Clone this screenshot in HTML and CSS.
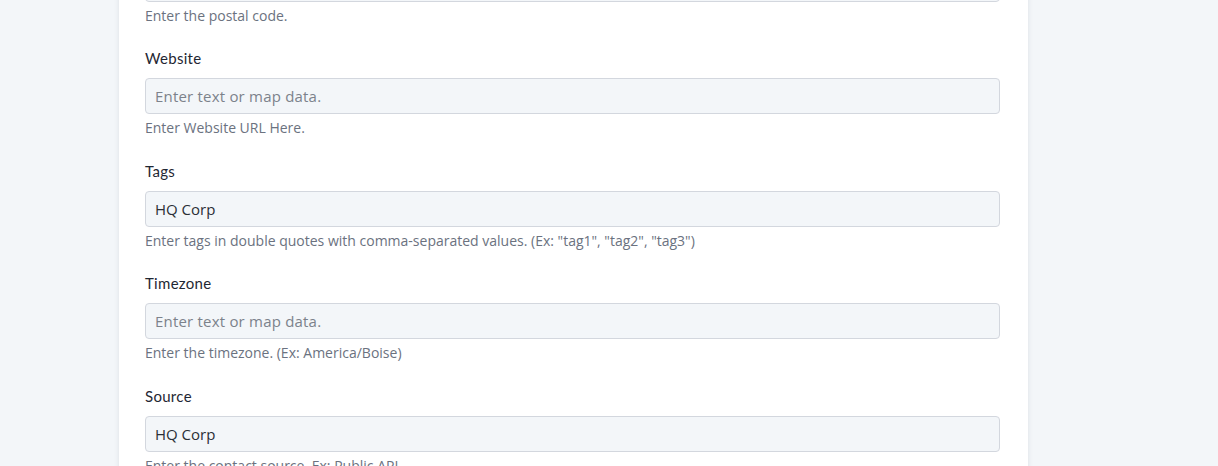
FILE: index.html
```html
<!DOCTYPE html>
<html lang="en">
<head>
<meta charset="utf-8">
<title>Contact details</title>
<link rel="stylesheet" href="styles.css">
</head>
<body>
<main class="page">
  <form class="card">
    <div class="field">
      <label class="label" for="postal">Postal Code</label>
      <input class="input" id="postal" type="text" placeholder="Enter text or map data.">
      <p class="help">Enter the postal code.</p>
    </div>
    <div class="field">
      <label class="label" for="website">Website</label>
      <input class="input" id="website" type="text" placeholder="Enter text or map data.">
      <p class="help">Enter Website URL Here.</p>
    </div>
    <div class="field">
      <label class="label" for="tags">Tags</label>
      <input class="input" id="tags" type="text" value="HQ Corp" placeholder="Enter text or map data.">
      <p class="help">Enter tags in double quotes with comma-separated values. (Ex: "tag1", "tag2", "tag3")</p>
    </div>
    <div class="field">
      <label class="label" for="timezone">Timezone</label>
      <input class="input" id="timezone" type="text" placeholder="Enter text or map data.">
      <p class="help">Enter the timezone. (Ex: America/Boise)</p>
    </div>
    <div class="field">
      <label class="label" for="source">Source</label>
      <input class="input" id="source" type="text" value="HQ Corp" placeholder="Enter text or map data.">
      <p class="help">Enter the contact source. Ex: Public API</p>
    </div>
  </form>
</main>
</body>
</html>
```

FILE: styles.css
```css
html, body {
  margin: 0;
  padding: 0;
  background: #f3f6f9;
  height: 100%;
  overflow: hidden;
}

.page {
  padding-left: 119px;
}

.card {
  width: 857px;
  margin-top: -64.5px;
  padding: 0 26px 40px;
  background: #ffffff;
  box-shadow: 0 0 5px rgba(30, 40, 60, 0.10);
  display: flex;
  flex-direction: column;
  gap: 23.5px;
  font-family: Lato, "Noto Sans", sans-serif;
}

.field {
  display: flex;
  flex-direction: column;
}

.label {
  font-size: 15px;
  line-height: 20px;
  letter-spacing: 0.3px;
  color: #1f2733;
  margin-bottom: 10px;
}

.input {
  box-sizing: border-box;
  width: 855px;
  height: 36px;
  margin: 0;
  padding: 0 9px;
  border: 1px solid #d3d7de;
  border-radius: 4px;
  background: #f3f6f9;
  font-family: "Open Sans", "Noto Sans", sans-serif;
  font-size: 15px;
  color: #2b2f36;
  outline: none;
}

.input::placeholder {
  color: #7c828b;
  letter-spacing: 0.2px;
  opacity: 1;
}

.help {
  margin: 5px 0 0;
  font-family: "Open Sans", "Noto Sans", sans-serif;
  font-size: 14px;
  line-height: 18px;
  color: #6b7280;
}
```
